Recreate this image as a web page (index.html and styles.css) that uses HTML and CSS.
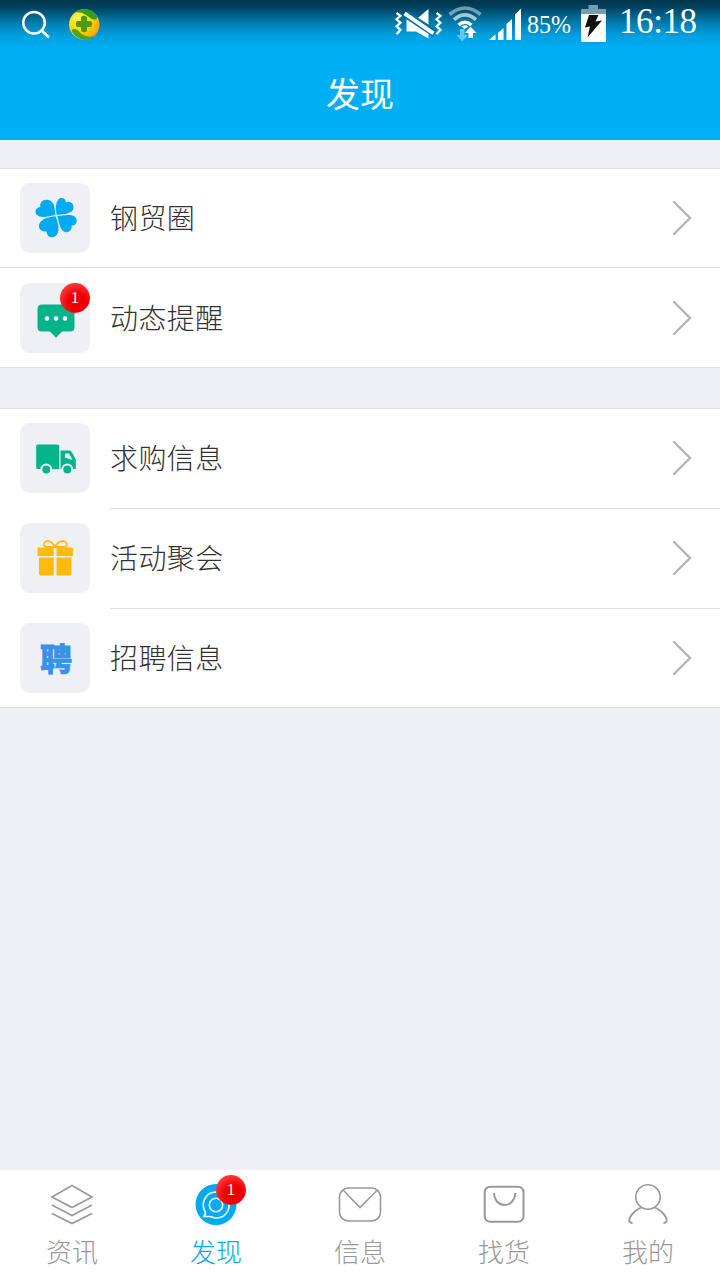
FILE: index.html
```html
<!DOCTYPE html>
<html lang="zh-CN">
<head>
<meta charset="utf-8">
<title>发现</title>
<link rel="stylesheet" href="styles.css">
</head>
<body>
<div class="app">
  <header class="header">
    <div class="status">
      <svg class="status-left" width="110" height="48" viewBox="0 0 110 48">
        <defs>
          <radialGradient id="gold" cx=".3" cy=".3" r=".8"><stop offset="0" stop-color="#fff35a"/><stop offset=".5" stop-color="#ffd800"/><stop offset="1" stop-color="#ff9d00"/></radialGradient>
        </defs>
        <g fill="none" stroke="#fff" stroke-linecap="round"><circle cx="34" cy="22.700" r="10.800" stroke-width="2.500"/><path d="M42 31l6 5.500" stroke-width="2.800"/></g>
        <circle cx="84.300" cy="24.500" r="15.200" fill="url(#gold)"/>
        <path d="M74.500 12.500C81 7 92 8 96.500 15.500c1 2 .5 4-1 4-5 0-6-2.500-9.500-4.500-4-2.500-7.500-3-11.500-2.500z" fill="#379c22"/>
        <path d="M71.500 30.500c2.500-2.500 5.500-1.500 8 1.500 4 4.500 9 5.500 15 4-6 6-17.500 5.500-23-5.500z" fill="#48a51e"/>
        <path d="M81 17q3-2.500 6 0v4h4q2.500 3 0 6h-4v4q-3 2.500-6 0v-4h-4q-2.500-3 0-6h4z" fill="#4c9b12"/>
      </svg>
      <svg class="status-right" width="330" height="48" viewBox="390 0 330 48">
        <g fill="none" stroke="#fff" stroke-width="2.200"><path d="M396.500 13l4 2.800-4 3.500 4 3.500-4 3.500 4 3.500-4 4.500M436.500 13l4 2.800-4 3.500 4 3.500-4 3.500 4 3.500-4 4.500"/></g>
        <path d="M406.500 19.500H416l12.500-10.500v29.500L416 31.500h-9.500z" fill="#fff"/>
        <path d="M405.500 14l29.500 19.500" stroke="#066f9e" stroke-width="7.500"/>
        <path d="M404.500 13.300L433.500 33.300" stroke="#fff" stroke-width="4"/>
        <g fill="none" stroke="#fff" stroke-width="3.600"><path d="M449.500 14.500q15.500-13 31 0" opacity=".45"/><path d="M454 19.700q11-9.500 22 0" opacity=".65"/><path d="M458.500 25q6.500-5.500 13 0"/></g>
        <path d="M461 26.500q4-2.500 7.500 0l-3.700 2.500z" fill="#fff"/>
        <path d="M460 29h4.500v6h3.500l-5.700 6.500-5.800-6.500h3.500z" fill="#61c7f6"/><path d="M470.500 26.500l6 6.500H473v5h-4.500v-5H465z" fill="#fff"/>
        <path d="M489 40l6.500-5.500V40zM498 33l5.500-5v12H498zM506.500 24l5.500-5v21h-5.500zM515 14.500l6-6V40h-6z" fill="#fff"/>
        <text class="status-text" x="527" y="33" font-size="25" textLength="44" lengthAdjust="spacingAndGlyphs">85%</text>
        <path d="M588.500 5h9.500v4h8v5h-25V9h7.500z" fill="#739db1"/><path d="M581 14h25v28h-25z" fill="#fff"/>
        <path d="M589 15h9.500l-3 6.500 6.500-1-14.500 17 2.500-11-5 1z" fill="#111"/>
        <text class="status-text" x="619" y="33" font-size="35" textLength="78" lengthAdjust="spacing">16:18</text>
      </svg>
    </div>
    <h1 class="title">发现</h1>
  </header>
  <main class="content">
    <section class="group">
      <a class="row full">
        <span class="tile"><svg width="70" height="70" viewBox="0 0 70 70" fill="#00aaf0">
          <path d="M35.500 32C29 33 21 36 16.500 31.500C14 28 16.500 24 20.500 24C19 19 24 15.500 28.500 17C35 18.500 34.500 26 35.500 32z"/>
          <path d="M36.800 32C35.500 25 35.500 18 39.500 15.500C43 14 46 16.500 46 19.500C50 17.500 54 20.500 53.500 25C53 31 43 31 36.800 32z"/>
          <path d="M35.700 33.300C29 34 20 36 19 42C18.500 46.500 22 49 26.500 48.500C27 53.500 31 55.500 35 53.500C41 49.500 38 40 35.700 33.300z"/>
          <path d="M37.200 33C43 32.500 50 30.500 54.500 33.500C59 37 56 43.500 51.500 42.500C52.500 47.500 48 50.500 44 48.500C39.500 46 39 38 37.200 33z"/>
        </svg></span>
        <span class="label">钢贸圈</span>
        <svg class="arrow" width="22" height="36" viewBox="0 0 22 36"><path d="M2 2l16 16L2 34"/></svg>
      </a>
      <a class="row full">
        <span class="tile"><svg width="70" height="70" viewBox="0 0 70 70"><path d="M22 21.500h28q4.500 0 4.500 4.500v18q0 4.500-4.500 4.500h-8L36 54.700l-6-6.200h-8q-4.500 0-4.500-4.500V26q0-4.500 4.500-4.500z" fill="#06b48c"/><g fill="#fff"><circle cx="27" cy="35.500" r="2.300"/><circle cx="36" cy="35.500" r="2.300"/><circle cx="45" cy="35.500" r="2.300"/></g></svg><b class="badge">1</b></span>
        <span class="label">动态提醒</span>
        <svg class="arrow" width="22" height="36" viewBox="0 0 22 36"><path d="M2 2l16 16L2 34"/></svg>
      </a>
    </section>
    <section class="group spaced">
      <a class="row">
        <span class="tile"><svg width="70" height="70" viewBox="0 0 70 70"><path d="M17.500 21.500h20q1.800 0 1.800 1.500v23H17.500q-1.300 0-1.300-1.500V23q0-1.500 1.300-1.500zM40.500 27.500h9q1.500 0 2.300 1.500l4 7.500v9.500H40.500z" fill="#06b48c"/><path d="M45 30.500h4l3.500 6.500L45 34.500z" fill="#f0f1f5"/><g fill="#06b48c" stroke="#f0f1f5" stroke-width="2"><circle cx="26.300" cy="46.500" r="5"/><circle cx="47.300" cy="46.500" r="5"/></g></svg></span>
        <span class="label">求购信息</span>
        <svg class="arrow" width="22" height="36" viewBox="0 0 22 36"><path d="M2 2l16 16L2 34"/></svg>
      </a>
      <a class="row inset">
        <span class="tile"><svg width="70" height="70" viewBox="0 0 70 70" fill="#ffb90f"><path d="M18.500 24.500h15.200V33H17.500v-7.500q0-1 1-1zM36.500 24.500H52q1 0 1 1V33H36.500zM19 34.500h14.700v18H21q-2 0-2-2zM36.500 34.500h15v16q0 2-2 2h-13z"/><path d="M35 24C31 16 24 17 24 21.500q.2 2.500 3.500 2.500H35M35 24C39 16 47 17 47 21.500q-.2 2.500-3.500 2.500H35" fill="none" stroke="#ffb90f" stroke-width="1.800"/></svg></span>
        <span class="label">活动聚会</span>
        <svg class="arrow" width="22" height="36" viewBox="0 0 22 36"><path d="M2 2l16 16L2 34"/></svg>
      </a>
      <a class="row inset last">
        <span class="tile hire">聘</span>
        <span class="label">招聘信息</span>
        <svg class="arrow" width="22" height="36" viewBox="0 0 22 36"><path d="M2 2l16 16L2 34"/></svg>
      </a>
    </section>
  </main>
  <nav class="tabs">
    <a class="tab"><svg width="44" height="44" viewBox="0 0 44 44"><path d="M22 3.500l20 11.500-20 10.500L2 15zM2 23l20 10.500L42 23M2 31.500l20 10L42 31.500"/></svg><span>资讯</span></a>
    <a class="tab active"><span class="tab-icon"><svg width="44" height="44" viewBox="0 0 44 44"><circle cx="22" cy="22.500" r="20.500" fill="#00aaf0" stroke="none"/><g stroke="#fff"><circle cx="22" cy="23" r="6.700"/><path d="M9.800 34.500q2.500-2.500 1.300-4.800C6.500 22 11 10 22 10c18 0 17 26 0 26-2 0-4.500-1.500-6-1.500z" stroke-linejoin="round"/></g></svg><b class="badge">1</b></span><span>发现</span></a>
    <a class="tab"><svg width="44" height="44" viewBox="0 0 44 44"><rect x="1.500" y="6" width="41" height="33" rx="9"/><path d="M5.500 8.500L22 25.500l17-17"/></svg><span>信息</span></a>
    <a class="tab"><svg width="44" height="44" viewBox="0 0 44 44"><rect x="2.700" y="4.700" width="38.800" height="35" rx="5.500" stroke-width="2"/><path d="M12 11c1 16 20 16 21.500 0" stroke-width="2"/></svg><span>找货</span></a>
    <a class="tab"><svg width="44" height="44" viewBox="0 0 44 44"><circle cx="22" cy="15" r="12.200"/><path d="M15 25.500C8 28.500 2 36 3.500 39.500q1 1.500 3 1.500M29 25.500c7 3 13 10.500 11.500 14q-1 1.500-3 1.500" stroke-width="1.900"/></svg><span>我的</span></a>
  </nav>
</div>
</body>
</html>
```
FILE: styles.css
```css
* { box-sizing: border-box; }
body {
  margin: 0;
  font-family: "AR PL UKai CN", "KaiTi", "Noto Sans CJK SC", sans-serif;
  font-weight: 300;
}
.app {
  display: flex;
  flex-direction: column;
  width: 720px;
  height: 1280px;
  background: #eff0f5;
}
.header {
  height: 140px;
  background: linear-gradient(#00344a 0, #00415e 7px, #0079aa 22px, #00a0df 36px, #00aef4 48px);
  color: #fff;
}
.status { display: flex; justify-content: space-between; height: 48px; }
.status-text { fill: #fff; font-family: "Liberation Serif", serif; font-weight: 400; }
.title {
  margin: 0;
  padding-top: 19px;
  font-size: 34px;
  line-height: 52px;
  font-weight: 400;
  text-align: center;
}
.content { flex: 1; padding-top: 28px; }
.group { background: #fff; }
.spaced { margin-top: 40px; }
.row {
  display: flex;
  position: relative;
  align-items: flex-start;
  height: 100px;
  padding: 15px 26px 0 20px;
}
.row:first-child { border-top: 1px solid #dedfe1; padding-top: 14px; }
.full, .last { border-bottom: 1px solid #dedfe1; }
.inset::before {
  content: "";
  position: absolute;
  top: 0;
  left: 110px;
  right: 0;
  height: 1px;
  background: #dedfe1;
}
.tile {
  position: relative;
  width: 70px;
  height: 70px;
  border-radius: 10px;
  background: #eff0f5;
}
.tile svg { display: block; }
.hire {
  padding-left: 2px;
  color: #3992e8;
  font: 900 32px/68px "Noto Sans CJK SC", sans-serif;
  text-align: center;
  -webkit-text-stroke: .6px #3992e8;
}
.label {
  flex: 1;
  margin-left: 20px;
  color: #333;
  font-size: 28px;
  line-height: 68px;
  letter-spacing: .4px;
}
.arrow { margin-top: 17px; fill: none; stroke: #b4b4b4; stroke-width: 2.4; stroke-linecap: round; }
.badge {
  position: absolute;
  top: 0;
  right: 0;
  width: 30px;
  height: 30px;
  border-radius: 50%;
  background: radial-gradient(circle at 58% 65%, #eb0000 0 35%, #ff3a3a 75%);
  color: #fff;
  font: 400 17px/29px "Liberation Serif", serif;
  text-align: center;
}
.tabs { display: grid; grid-template-columns: repeat(5, 144px); height: 110px; background: #fff; }
.tab {
  display: flex;
  flex-direction: column;
  align-items: center;
  padding-top: 12px;
  color: #999;
  font-size: 26px;
  line-height: 50px;
}
.tab svg { display: block; fill: none; stroke: #999; stroke-width: 1.6; }
.tab-icon { position: relative; }
.tab-icon .badge { top: -7px; right: -8px; }
.active { color: #00aaf0; }
```
